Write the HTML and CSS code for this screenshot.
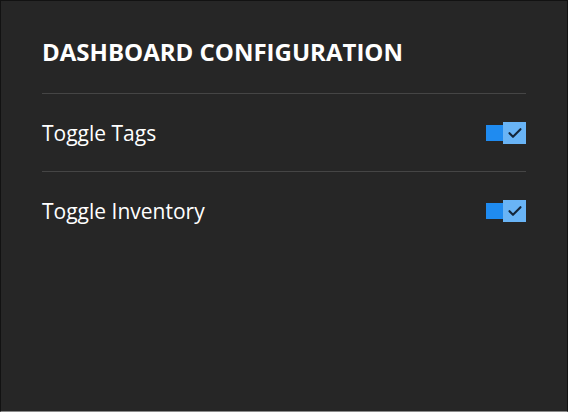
FILE: index.html
```html
<!DOCTYPE html>
<html>
<head>
<meta charset="utf-8">
<link rel="stylesheet" href="styles.css">
</head>
<body>
<div class="panel">
  <h1 class="title">DASHBOARD CONFIGURATION</h1>
  <div class="row">
    <span class="label">Toggle Tags</span>
    <span class="toggle">
      <span class="track"></span>
      <span class="check"><svg width="14" height="12" viewBox="0 0 14 12"><path d="M1.5 6.2 L5 9.8 L12.5 2.2" fill="none" stroke="#14263a" stroke-width="2.1" stroke-linecap="round" stroke-linejoin="round"/></svg></span>
    </span>
  </div>
  <div class="row">
    <span class="label">Toggle Inventory</span>
    <span class="toggle">
      <span class="track"></span>
      <span class="check"><svg width="14" height="12" viewBox="0 0 14 12"><path d="M1.5 6.2 L5 9.8 L12.5 2.2" fill="none" stroke="#14263a" stroke-width="2.1" stroke-linecap="round" stroke-linejoin="round"/></svg></span>
    </span>
  </div>
</div>
</body>
</html>
```
FILE: styles.css
```css
html, body {
  margin: 0;
  padding: 0;
  background: #262626;
}
body {
  width: 568px;
  height: 412px;
  overflow: hidden;
  font-family: "Open Sans", "Noto Sans", sans-serif;
  color: #ffffff;
}
.panel {
  box-sizing: border-box;
  width: 568px;
  height: 412px;
  border: 1px solid #121212;
  border-bottom: 1px solid #8a8a8a;
  background: #262626;
  padding: 37px 41px 0 41px;
}
.title {
  margin: 0 0 27px 0;
  font-size: 24px;
  line-height: 28px;
  font-weight: 700;
}
.row {
  display: flex;
  align-items: center;
  justify-content: space-between;
  height: 77px;
  border-top: 1px solid #454545;
}
.label {
  font-size: 21px;
  line-height: 26px;
  color: #ffffff;
  margin-top: 1px;
}
.toggle {
  display: flex;
  align-items: center;
}
.track {
  width: 17px;
  height: 16px;
  background: #1f8bf0;
}
.check {
  width: 23px;
  height: 22px;
  background: #69b4f6;
  display: flex;
  align-items: center;
  justify-content: center;
}
```
